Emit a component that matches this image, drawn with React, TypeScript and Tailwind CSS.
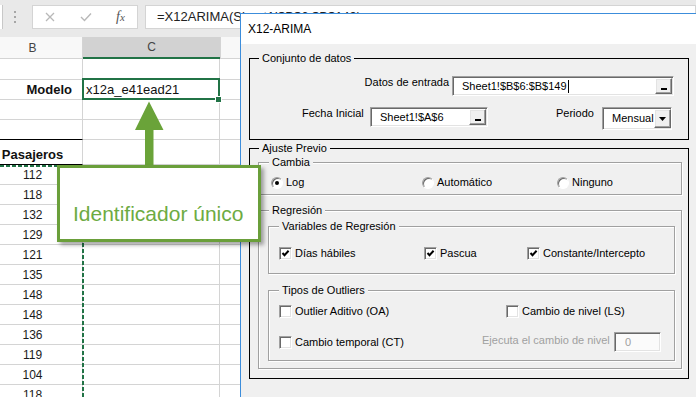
import React from "react";

const sans = { fontFamily: '"Liberation Sans", Arial, sans-serif' };

const sunken =
  "bg-white border border-t-[#a0a0a0] border-l-[#a0a0a0] border-r-[#ffffff] border-b-[#ffffff] shadow-[inset_1px_1px_0_#696969,inset_-1px_-1px_0_#e3e3e3]";
const raised =
  "bg-[#f0f0f0] border border-t-[#ffffff] border-l-[#ffffff] border-r-[#696969] border-b-[#696969] shadow-[inset_-1px_-1px_0_#a0a0a0,inset_1px_1px_0_#e3e3e3]";
const etched =
  "border border-[#a0a0a0] shadow-[inset_1px_1px_0_#ffffff,1px_1px_0_#ffffff]";

function CheckMark() {
  return (
    <svg width="9" height="9" viewBox="0 0 9 9">
      <path d="M1.5 4 L3.5 6.2 L7.6 1.8" fill="none" stroke="#000" strokeWidth="2" />
    </svg>
  );
}

function CheckBox({ checked = false }: { checked?: boolean }) {
  return (
    <div className={`w-[13px] h-[13px] shrink-0 flex items-center justify-center ${sunken}`}>
      {checked && <CheckMark />}
    </div>
  );
}

function Radio({ selected = false }: { selected?: boolean }) {
  return (
    <div className="w-[12px] h-[12px] rounded-full shrink-0 bg-white border border-t-[#a0a0a0] border-l-[#a0a0a0] border-r-[#ffffff] border-b-[#ffffff] shadow-[inset_1px_1px_0_#696969] flex items-center justify-center">
      {selected && <div className="w-[4px] h-[4px] rounded-full bg-black" />}
    </div>
  );
}

function DotButton() {
  return (
    <div className={`ml-auto mr-[1px] w-[17px] h-[16px] shrink-0 flex items-end justify-center pb-[3px] ${raised}`}>
      <div className="w-[6px] h-[2px] bg-black" />
    </div>
  );
}

function DropButton() {
  return (
    <div className={`ml-auto mr-[1px] w-[17px] h-[19px] shrink-0 flex items-center justify-center ${raised}`}>
      <svg width="7" height="4" viewBox="0 0 7 4">
        <path d="M0 0 H7 L3.5 4 Z" fill="#000" />
      </svg>
    </div>
  );
}

const nums = ["112", "118", "132", "129", "121", "135", "148", "148", "136", "119", "104", "118"];

export default function App() {
  return (
    <div className="relative w-[696px] h-[397px] overflow-hidden bg-white" style={sans}>
      {/* Formula bar */}
      <div className="h-[37px] bg-[#e9e9e9] flex items-start pt-[5px]">
        <div className="w-[3px] h-[24px] bg-white border-r border-[#c8c8c8]" />
        <div className="w-[29px] h-[24px] flex flex-col items-start justify-center gap-[3px] pl-[11px]">
          <div className="w-[2px] h-[2px] bg-[#a6a6a6]" />
          <div className="w-[2px] h-[2px] bg-[#a6a6a6]" />
          <div className="w-[2px] h-[2px] bg-[#a6a6a6]" />
        </div>
        <div className="w-[106px] h-[24px] bg-white border border-[#d4d4d4] flex items-center">
          <svg className="ml-[12px]" width="10" height="10" viewBox="0 0 10 10">
            <path d="M1 1 L9 9 M9 1 L1 9" stroke="#b8b8b8" strokeWidth="1.3" />
          </svg>
          <svg className="ml-[25px]" width="12" height="10" viewBox="0 0 12 10">
            <path d="M1 5 L4.5 8.5 L11 1.5" stroke="#b8b8b8" strokeWidth="1.4" fill="none" />
          </svg>
          <span
            className="ml-[24px] text-[14px] italic text-[#555] leading-none"
            style={{ fontFamily: '"Liberation Serif", serif' }}
          >
            f<span className="text-[11px]">x</span>
          </span>
        </div>
        <div className="ml-[7px] flex-1 h-[24px] bg-white border border-[#d4d4d4] flex items-center pl-[11px] text-[13px] text-[#222]">
          =X12ARIMA(Sheet1!$B$6:$B$149)
        </div>
      </div>

      {/* Grid */}
      <div className="-ml-[17px] w-[257px] flex flex-col">
        <div className="flex h-[22px] text-[12px] text-[#444]">
          <div className="w-[100px] bg-[#f8f8f8] border-b border-r border-[#d4d4d4] flex items-center justify-center">B</div>
          <div className="w-[137px] bg-[#d2d2d2] border-b-2 border-[#217346] flex items-center justify-center">C</div>
          <div className="flex-1 bg-[#f8f8f8] border-b border-l border-[#d4d4d4]" />
        </div>
        <div className="flex h-[21px]">
          <div className="w-[100px] border-r border-b border-[#d4d4d4]" />
          <div className="w-[137px] border-r border-b border-[#d4d4d4]" />
          <div className="flex-1 border-b border-[#d4d4d4]" />
        </div>
        <div className="flex h-[20px] text-[13px] text-[#111]">
          <div className="w-[100px] border-r border-b border-[#d4d4d4] flex items-center justify-end pr-[10px] font-bold">Modelo</div>
          <div className="w-[137px] border-r border-b border-[#d4d4d4] flex items-center pl-[3px]">x12a_e41ead21</div>
          <div className="flex-1 border-b border-[#d4d4d4]" />
        </div>
        <div className="flex h-[20px]">
          <div className="w-[100px] border-r border-b border-[#d4d4d4]" />
          <div className="w-[137px] border-r border-b border-[#d4d4d4]" />
          <div className="flex-1 border-b border-[#d4d4d4]" />
        </div>
        <div className="flex h-[20px]">
          <div className="w-[100px] border-r border-b border-[#d4d4d4] border-b-black" />
          <div className="w-[137px] border-r border-b border-[#d4d4d4]" />
          <div className="flex-1 border-b border-[#d4d4d4]" />
        </div>
        <div className="flex h-[25px] text-[13px] text-[#111]">
          <div className="w-[100px] border-r border-b border-[#d4d4d4] border-b-black flex items-end justify-center pb-[2px] leading-[15px] font-bold">
            Pasajeros
          </div>
          <div className="w-[137px] border-r border-b border-[#d4d4d4]" />
          <div className="flex-1 border-b border-[#d4d4d4]" />
        </div>
        {nums.map((n, i) => (
          <div key={i} className="flex h-[20px] shrink-0">
            <div className="w-[100px] border-r border-b border-[#d4d4d4] flex items-center justify-center text-[12px] text-[#1a1a1a]">
              {n}
            </div>
            <div className="w-[137px] border-r border-b border-[#d4d4d4]" />
            <div className="flex-1 border-b border-[#d4d4d4]" />
          </div>
        ))}
      </div>

      {/* Selected cell */}
      <div className="absolute left-[82px] top-[78px] w-[138px] h-[22px] border-2 border-[#217346]" />
      <div className="absolute left-[215px] top-[96px] w-[7px] h-[7px] bg-[#217346] border border-white" />

      {/* Copy marquee */}
      <svg className="absolute left-0 top-[160px]" width="90" height="237" viewBox="0 160 90 237">
        <path d="M0 166 H84" stroke="#217346" strokeWidth="2" strokeDasharray="4 2" />
        <path d="M83 165 V397" stroke="#217346" strokeWidth="2" strokeDasharray="4 2" />
      </svg>

      {/* Arrow */}
      <svg className="absolute left-[130px] top-[95px]" width="40" height="75" viewBox="130 95 40 75">
        <polygon
          points="149,101.5 163.5,130 153.5,130 153.5,170 145,170 145,130 135,130"
          fill="#6aa339"
        />
      </svg>

      {/* Dialog */}
      <div className="absolute left-[240px] top-[13px] w-[470px] h-[400px] border-l border-t border-[#3c8ddb] bg-[#f0f0f0] flex flex-col">
        <div className="h-[30px] bg-white flex items-center pl-[7px] text-[12px] text-black">X12-ARIMA</div>
        <div className="pl-[8px] pt-[8px] text-[11px] leading-[13px] text-black">
          <fieldset className="w-[440px] border border-black">
            <legend className="ml-[9px] px-[3px]">Conjunto de datos</legend>
            <div className="mt-[11px] flex justify-end items-start pr-[14px] gap-[3px]">
              <span>Datos de entrada</span>
              <div className={`w-[222px] h-[20px] flex items-center ${sunken}`}>
                <span className="pl-[9px]">Sheet1!$B$6:$B$149</span>
                <span className="ml-[1px] w-px h-[13px] bg-black" />
                <DotButton />
              </div>
            </div>
            <div className="mt-[11px] pb-[9px] flex items-start pl-[52px]">
              <span className="w-[68px]">Fecha Inicial</span>
              <div className={`w-[118px] h-[20px] flex items-center ${sunken}`}>
                <span className="pl-[9px]">Sheet1!$A$6</span>
                <DotButton />
              </div>
              <span className="ml-[68px] w-[46px]">Periodo</span>
              <div className={`w-[70px] h-[23px] flex items-center ${sunken}`}>
                <span className="pl-[9px]">Mensual</span>
                <DropButton />
              </div>
            </div>
          </fieldset>

          <fieldset className="mt-[2px] w-[440px] border border-black pb-[9px]">
            <legend className="ml-[9px] px-[3px]">Ajuste Previo</legend>

            <fieldset className={`mt-[1px] ml-[8px] w-[424px] pb-[5px] ${etched}`}>
              <legend className="ml-[10px] px-[3px] bg-[#f0f0f0]">Cambia</legend>
              <div className="mt-[7px] h-[13px] flex items-center pl-[12px]">
                <div className="w-[151px] flex items-center">
                  <Radio selected />
                  <span className="ml-[3px]">Log</span>
                </div>
                <div className="w-[135px] flex items-center">
                  <Radio />
                  <span className="ml-[3px]">Automático</span>
                </div>
                <div className="flex items-center">
                  <Radio />
                  <span className="ml-[3px]">Ninguno</span>
                </div>
              </div>
            </fieldset>

            <fieldset className={`mt-[9px] ml-[8px] w-[424px] pb-[7px] ${etched}`}>
              <legend className="ml-[10px] px-[3px] bg-[#f0f0f0]">Regresión</legend>

              <fieldset className={`mt-[3px] ml-[9px] w-[407px] pb-[13px] ${etched}`}>
                <legend className="ml-[10px] px-[3px] bg-[#f0f0f0]">Variables de Regresión</legend>
                <div className="mt-[14px] h-[13px] flex items-center pl-[10px]">
                  <div className="w-[145px] flex items-center">
                    <CheckBox checked />
                    <span className="ml-[3px]">Días hábiles</span>
                  </div>
                  <div className="w-[103px] flex items-center">
                    <CheckBox checked />
                    <span className="ml-[3px]">Pascua</span>
                  </div>
                  <div className="flex items-center">
                    <CheckBox checked />
                    <span className="ml-[3px]">Constante/Intercepto</span>
                  </div>
                </div>
              </fieldset>

              <fieldset className={`mt-[10px] ml-[9px] w-[407px] pb-[8px] ${etched}`}>
                <legend className="ml-[10px] px-[3px] bg-[#f0f0f0]">Tipos de Outliers</legend>
                <div className="mt-[8px] h-[13px] flex items-center pl-[10px]">
                  <div className="w-[227px] flex items-center">
                    <CheckBox />
                    <span className="ml-[3px]">Outlier Aditivo (OA)</span>
                  </div>
                  <div className="flex items-center">
                    <CheckBox />
                    <span className="ml-[3px]">Cambio de nivel (LS)</span>
                  </div>
                </div>
                <div className="mt-[14px] h-[20px] flex items-center pl-[10px]">
                  <div className="w-[203px] flex items-center">
                    <CheckBox />
                    <span className="ml-[3px]">Cambio temporal (CT)</span>
                  </div>
                  <span className="w-[132px] text-[#a0a0a0] -mt-[4px]">Ejecuta el cambio de nivel</span>
                  <div className="w-[47px] h-[20px] flex items-center pl-[10px] text-[#a0a0a0] bg-[#fbfbfb] border border-t-[#a0a0a0] border-l-[#a0a0a0] border-r-[#ffffff] border-b-[#ffffff] shadow-[inset_1px_1px_0_#696969,inset_-1px_-1px_0_#e3e3e3]">
                    0
                  </div>
                </div>
              </fieldset>
            </fieldset>
          </fieldset>
        </div>
      </div>

      {/* Callout */}
      <div className="absolute left-[57px] top-[165px] w-[204px] h-[77px] bg-white border-[3px] border-[#6a9f3a] shadow-[3px_3px_4px_rgba(0,0,0,0.35)] pl-[13px] pt-[34px]">
        <div className="text-[21px] leading-[24px] text-[#6dab42] whitespace-nowrap">Identificador único</div>
      </div>
    </div>
  );
}
